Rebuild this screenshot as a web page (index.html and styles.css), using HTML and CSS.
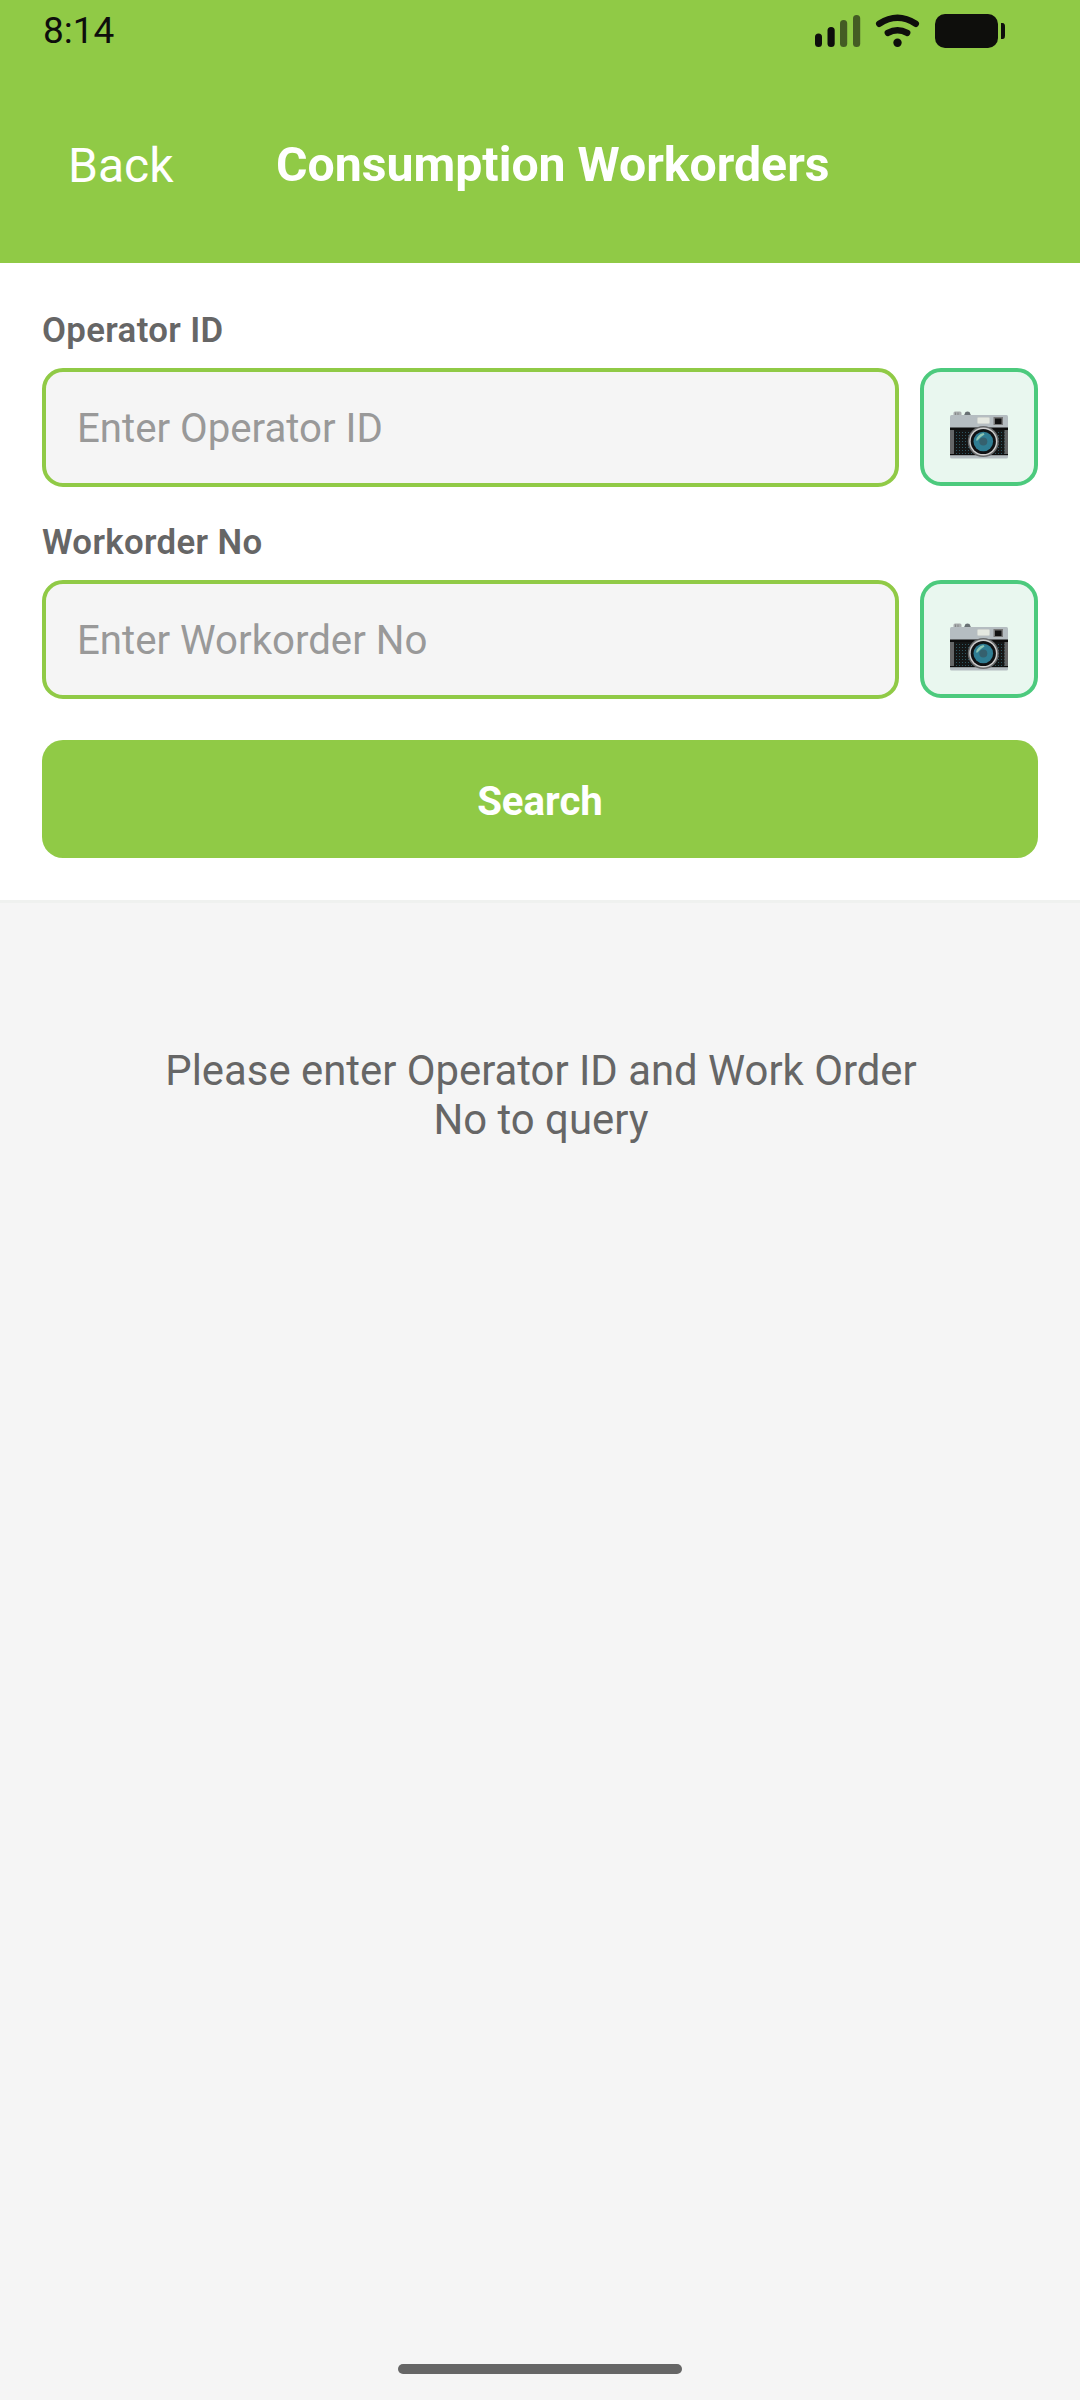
FILE: index.html
```html
<!DOCTYPE html>
<html lang="en">
<head>
<meta charset="utf-8">
<title>Consumption Workorders</title>
<link rel="stylesheet" href="styles.css">
</head>
<body>
<svg class="defs" width="0" height="0" aria-hidden="true">
  <defs>
    <pattern id="grain" width="3" height="3" patternUnits="userSpaceOnUse">
      <rect width="3" height="3" fill="#141616"/>
      <rect width="1" height="1" fill="#2d5560"/>
    </pattern>
    <symbol id="camera" viewBox="0 0 58 48">
      <rect x="3.5" y="0.5" width="8" height="5" rx="1.5" fill="#a9adae"/>
      <path d="M5.5 1.5v3M8 1.5v3" stroke="#858989" stroke-width="1"/>
      <path d="M14 4.5l1.5-3.5q2-1 4 0l1.5 3.500z" fill="#687073"/>
      <rect x="0" y="4" width="58" height="43.500" rx="1.5" fill="#b5bdc1"/>
      <rect x="0" y="16.500" width="58" height="3" fill="#0d0d0d"/>
      <rect x="0" y="19.500" width="58" height="24" fill="#656667"/>
      <rect x="4" y="19" width="50.500" height="24.500" fill="url(#grain)"/>
      <rect x="0" y="43" width="58" height="1.200" fill="#0d0d0d"/>
      <rect x="27.500" y="6.500" width="12" height="6" rx="1" fill="#e4e8e0" stroke="#d0d4d0" stroke-width="1"/>
      <rect x="43.500" y="6" width="9.500" height="8" fill="#777"/>
      <rect x="45" y="7.500" width="6.500" height="5.500" fill="#111"/>
      <circle cx="33.300" cy="30.500" r="15.500" fill="#67696a"/>
      <circle cx="33.300" cy="30.500" r="14" fill="#cfcfcf"/>
      <circle cx="33.300" cy="30.500" r="12.600" fill="#101214"/>
      <circle cx="33.300" cy="30.500" r="9.800" fill="#2f7d93"/>
      <circle cx="33.300" cy="30.500" r="4" fill="#35606e"/>
      <path d="M26 29.500q1-6 7.500-7.500l1 1.500q-3 1.500-7 6z" fill="#8cc5b3"/>
    </symbol>
  </defs>
</svg>
<div class="screen">
  <header class="header">
    <div class="status">
      <span class="time">8:14</span>
      <svg class="status-icons" width="192" height="36" viewBox="0 0 192 36">
        <g fill="#0e0e0c">
          <rect x="1" y="20.500" width="7" height="13.500" rx="3.500"/>
          <rect x="13.500" y="14" width="7.200" height="20" rx="3.500"/>
          <g opacity=".58">
            <rect x="26" y="7" width="7.200" height="27" rx="3.500"/>
            <rect x="39" y="2" width="7.200" height="32" rx="3.500"/>
          </g>
          <circle cx="83.500" cy="29.800" r="4.200"/>
          <rect x="121" y="1" width="63" height="34" rx="10"/>
          <path d="M187 10h1.500q2.500 0 2.500 3.500v9q0 3.500-2.500 3.500h-1.500z"/>
        </g>
        <g fill="none" stroke="#0e0e0c" stroke-width="6.400" stroke-linecap="round">
          <path d="M65.200 10.800q18.300-12 36.600 0"/>
          <path d="M73.800 19.800q9.700-5 19.400 0"/>
        </g>
      </svg>
    </div>
    <div class="nav">
      <a class="back">Back</a>
      <h1 class="title">Consumption Workorders</h1>
    </div>
  </header>
  <form class="search-panel">
    <label class="label" for="operator">Operator ID</label>
    <div class="row">
      <input class="input" id="operator" type="text" placeholder="Enter Operator ID">
      <button class="scan" type="button" aria-label="Scan operator"><svg class="camera"><use href="#camera"/></svg></button>
    </div>
    <label class="label" for="workorder">Workorder No</label>
    <div class="row">
      <input class="input" id="workorder" type="text" placeholder="Enter Workorder No">
      <button class="scan" type="button" aria-label="Scan workorder"><svg class="camera"><use href="#camera"/></svg></button>
    </div>
    <button class="search" type="button">Search</button>
  </form>
  <main class="empty">Please enter Operator ID and Work Order No to query</main>
  <div class="home-bar"></div>
</div>
</body>
</html>
```
FILE: styles.css
```css
* { box-sizing: border-box; }
body { margin: 0; font-family: Roboto, sans-serif; background: #f5f5f5; }
.defs { display: block; }
.screen { width: 1080px; height: 2400px; display: flex; flex-direction: column; align-items: stretch; background: #f5f5f5; }
.header { height: 263px; background: #90ca46; flex: none; }
.status { height: 62px; display: flex; justify-content: space-between; padding: 13px 74px 0 43px; color: #0e0e0c; }
.time { font-size: 37px; line-height: 36px; }
.nav { display: flex; align-items: center; height: 205px; padding: 0 68px; color: #fff; }
.back { font-size: 48px; line-height: 56px; width: 208px; padding-top: 2px; }
.title { margin: 0; font-size: 48.2px; line-height: 56px; font-weight: 700; white-space: nowrap; }
.search-panel { height: 640px; flex: none; display: flex; flex-direction: column; padding: 47px 42px 0; background: #fff; border-bottom: 3px solid #eff1ef; }
.label { font-size: 34.8px; line-height: 40px; font-weight: 600; letter-spacing: 0.35px; color: #666; margin-bottom: 18px; }
.row { display: flex; gap: 21px; height: 119px; margin-bottom: 35px; flex: none; }
.input { flex: 1; min-width: 0; height: 119px; border: 4px solid #90ca46; border-radius: 21px; background: #f5f5f5; padding: 1px 31px 0; font: 400 40.2px Roboto, sans-serif; color: #333; }
.input::placeholder { color: #999; opacity: 1; }
.scan { width: 118px; height: 118px; border: 4px solid #4cca7d; border-radius: 21px; background: #e9f7ef; padding: 15px 0 0; display: flex; align-items: center; justify-content: center; }
.camera { width: 58px; height: 48px; display: block; }
.search { height: 118px; flex: none; margin-top: 6px; border: 0; border-radius: 21px; background: #90ca46; color: #fff; font: 700 40.2px Roboto, sans-serif; padding: 4px 0 0; }
.empty { flex: 1; padding: 143px 146px 0 148px; text-align: center; font-size: 41.85px; line-height: 49px; color: #666; }
.home-bar { width: 284px; height: 10px; flex: none; margin: 0 auto 26px; border-radius: 5px; background: #666; }
```
